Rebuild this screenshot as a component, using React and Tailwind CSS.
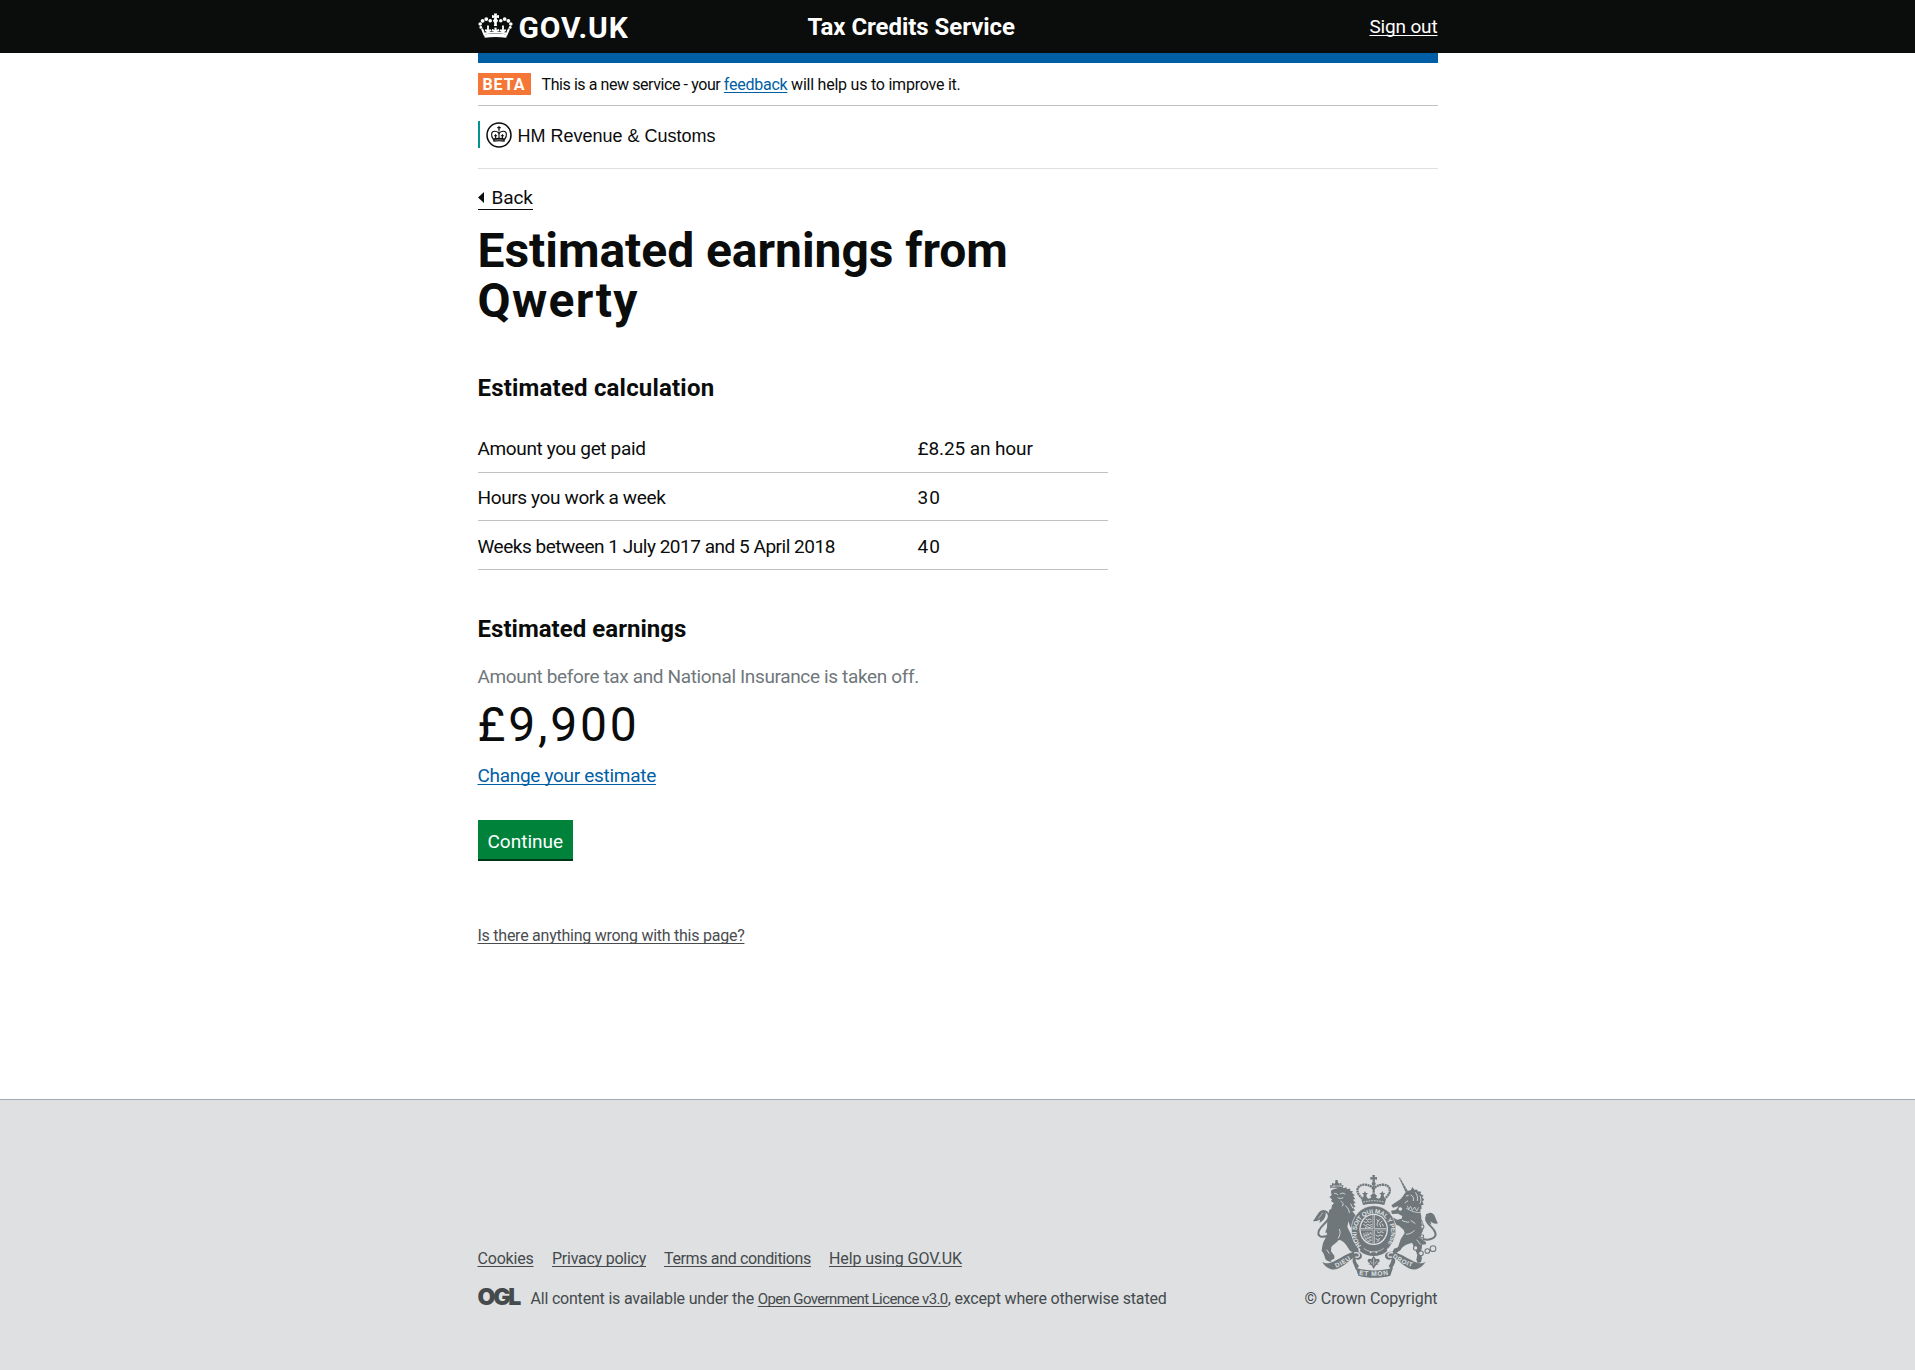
import React from "react";

const link = "underline underline-offset-[2px] decoration-1 [text-decoration-skip-ink:none]";

function GovCrown() {
  return (
    <svg width="35" height="26" viewBox="0 0 35 26" fill="#fff" className="block shrink-0">
      <path d="M15.9 0.4h3.2l-0.4 2.2 2.3-0.5v3l-2.3-0.4 0.3 1.5c0.9 0.4 1.2 1.4 0.7 2.3l-1 1.2 0.3 3.2h-3l0.3-3.2-1-1.2c-0.5-0.9-0.2-1.9 0.7-2.3l0.3-1.5-2.3 0.4v-3l2.3 0.5z" />
      <circle cx="12.2" cy="7.7" r="1.8" />
      <circle cx="8.3" cy="6.1" r="1.9" />
      <circle cx="4.6" cy="7.8" r="1.9" />
      <circle cx="2.2" cy="11" r="1.8" />
      <circle cx="2.8" cy="14.4" r="1.4" />
      <circle cx="22.8" cy="7.7" r="1.8" />
      <circle cx="26.7" cy="6.1" r="1.9" />
      <circle cx="30.4" cy="7.8" r="1.9" />
      <circle cx="32.8" cy="11" r="1.8" />
      <circle cx="32.2" cy="14.4" r="1.4" />
      <g fill="none" stroke="#fff">
        <path d="M4 15.6l2.6 6.6M31 15.6l-2.6 6.6" strokeWidth="2" />
        <path d="M10 12.6v7.6M25 12.6v7.6" strokeWidth="1.8" />
        <path d="M7.2 16.8l2.8 1.8 2.8-1.8M22.2 16.8l2.8 1.8 2.8-1.8" strokeWidth="2" />
        <path d="M17.5 14.6v5.4" strokeWidth="2.2" />
        <path d="M13.8 16.8l3.7 1.4 3.7-1.4" strokeWidth="1.8" />
        <path d="M6.6 20.4c7-1.3 14.8-1.3 21.8 0" strokeWidth="1.6" />
      </g>
      <path d="M5.8 21.6c7.6-1.6 15.8-1.6 23.4 0l-1 3.2c-6.8-1.2-14.6-1.2-21.4 0z" />
    </svg>
  );
}

function HmrcCrest() {
  return (
    <svg width="26" height="26" viewBox="0 0 26 26" className="block shrink-0" fill="none" stroke="#0b0c0c">
      <circle cx="13" cy="13" r="12" strokeWidth="1.5" />
      <path d="M13 4.2v4.6M11.3 5.6h3.4" strokeWidth="1.3" />
      <path d="M7.4 17.4C4.4 13.4 5.2 9.4 8.6 9.3c2.2-0.1 3.8 1 4.4 2.2 0.6-1.2 2.2-2.3 4.4-2.2 3.4 0.1 4.2 4.1 1.2 8.1" strokeWidth="1.1" />
      <path d="M13 9.5v7M9.6 12.2v4.6M16.4 12.2v4.6M8.1 13.8h3M14.9 13.8h3" strokeWidth="1.1" />
      <path d="M7 16.4c3.8-1 8.2-1 12 0l-0.4 3.4c-3.6-0.8-7.6-0.8-11.2 0z" fill="#0b0c0c" stroke="none" />
      <path d="M8.6 18.1c2.8-0.4 6-0.4 8.8 0" strokeWidth="0.5" stroke="#fff" />
    </svg>
  );
}

function CoatOfArms() {
  const g = "#6f777b";
  const bg = "#dee0e2";
  return (
    <svg width="125" height="103" viewBox="69 44 375 309" className="block" fill={g}>
      <defs>
        <path id="garter" d="M214 256A52 57 0 1 1 289 256" />
        <path id="left-scroll" d="M138 322Q164 313 189 292" />
        <path id="mid-scroll" d="M207 343Q251 352 298 342" />
        <path id="right-scroll" d="M307 290Q335 312 372 322" />
      </defs>

      {/* imperial crown */}
      <path d="M247 44h8l-1 7 7-1v8l-7-1 1 7h-8l1-7-7 1v-8l7 1z" />
      <circle cx="251" cy="70" r="6" />
      <g fill="none" stroke={g}>
        <path d="M217 114C194 96 200 74 222 73c14 0 24 5 29 14 5-9 15-14 29-14 22 1 28 23 5 41" strokeWidth="7" strokeDasharray="6 1.5" />
        <path d="M251 76v42" strokeWidth="7" strokeDasharray="6 1.5" />
      </g>
      <path d="M214 117c4-2 7-7 7-14l-5-5h6l3-6 3 6h6l-5 5c0 6 3 11 7 12l8-3-3-6 6-5 8 0 6 5-3 6 8 3c4-1 7-6 7-12l-5-5h6l3-6 3 6h6l-5 5c0 7 3 12 7 14l-5 17c-20-5-44-5-64 0z" />
      <path d="M220 125c20-5 42-5 62 0" fill="none" stroke={bg} strokeWidth="2.5" strokeDasharray="5 3" />

      {/* lion */}
      <path d="M121 84l-1-11 5 3 2-9 6 4 4-7h-1v-5h7v5l4 6 7-3 1 9 6-2-4 11c-12-3-24-3-36-1z" />
      <path d="M124 80c10-4 22-4 32-1M130 74l5 3M148 72l3 4" fill="none" stroke={bg} strokeWidth="2" />
      <path d="M124 90c10-7 26-9 38-7l8-2 0 5 11-1-1 6 9 2-3 5 9 7-6 2 7 9-7 2 8 10-7 2 7 10-7 1 5 10-8 1 6 8c8 8 13 21 14 34l5 11-4 8-13 0-14-13-6-17-3 16c4 10 12 22 17 38l10 17 6 10 1 11-10 2-15-4-8-12c-6-12-14-20-26-23-8 10-18 14-23 22l-1 13 10 13 0 9-10 5 1 5-9-2-8-5-6-18-6-9 2-14c2-14 10-24 15-34l-3-7-4 2 6-16 1-25 5-6 0-21 7-5 2-10 6-6-9-7 3-5-8-7 7-5-2-10z" />
      <path d="M132 100c6-2 9 0 12 4M150 101c7-4 12-3 16 1M143 112c6 3 11 3 17 0M152 122l8 8-3 8M166 136c8 6 12 14 12 22M148 206c4 8 3 19-4 28M110 268l8 12M182 130l7 14" fill="none" stroke={bg} strokeWidth="2.6" />
      <path d="M118 224c-24 11-38 4-31-14 6-14 25-24 29-38 3-12-5-20-18-20" fill="none" stroke={g} strokeWidth="6" />
      <path d="M100 149c-15 2-15 13-31 33 9 2 17-1 22-5l-3 10c13-4 21-19 19-31z" />
      <path d="M99 157c-6 6-8 12-15 18" fill="none" stroke={bg} strokeWidth="2" />

      {/* unicorn */}
      <path d="M326 51l5 3 22 37-6 5z" />
      <path d="M330 59l5-2M335 68l5-3M340 77l5-4M345 86l5-4" stroke={bg} strokeWidth="1.6" />
      <path d="M332 116c8-9 13-19 18-23l13-4 4-9 6 8 10 0-1 5 12 1-3 6 10 6-5 4 7 9-6 3 4 11-7 2 1 11-8 1c5 9 8 20 7 30 10 14 8 30 2 40l-8 14 20 15 0 6-12 1c0 10-2 19-5 25l5 14-3 14-10 2-4-10 3-14-7-18-9-19c-17 5-29 10-34 22l-14 10-12-1 6-13 12-4 8-24 12-19-3-9-14-13-7-2-8-12-11 2-2-10-12-4-5-12 5-7 12 5 7 13 15 9 14-3 2-8c-9-3-15-8-18-15l6-15-8 3-8 2-5-7z" />
      <path d="M348 107l8-2M362 104c8 4 10 10 8 18M376 96c6 6 8 16 6 26M390 106c4 10 3 18 0 24M344 128l10-7M362 180l14 10M374 210c-8 8-18 12-26 12M336 180c8 4 14 6 22 5M395 184c3 8 3 16-1 22M380 238l12 15" fill="none" stroke={bg} strokeWidth="2.6" />
      <path d="M350 134l5 12 6-10 6 13 7-11 6 13 7-12 5 10-3 12c-14-1-30-5-43-13z" />
      <path d="M349 144c12 8 27 13 42 13M352 136l4 11 6-9 5 12 7-10 6 12 6-11" fill="none" stroke={bg} strokeWidth="2.2" />
      <path d="M303 151l13-2 12-10 14 4-5 12-15 5-16 1z" />
      <circle cx="331" cy="146" r="5.5" fill={bg} />
      <path d="M398 236c24 6 42-4 38-19-4-15-22-22-27-37-3-12 6-19 17-18" fill="none" stroke={g} strokeWidth="6" />
      <path d="M420 157c15 1 14 13 24 32-9 3-17-1-22-6l2 10c-13-5-19-20-16-31z" />
      <g fill={bg} stroke={g} strokeWidth="3.2">
        <circle cx="397" cy="199" r="5" />
        <circle cx="396" cy="228" r="5" />
        <circle cx="377" cy="263" r="6.5" />
        <circle cx="393" cy="279" r="7" />
        <circle cx="412" cy="272" r="7" />
        <circle cx="429" cy="265" r="8.5" />
      </g>

      {/* garter and shield */}
      <ellipse cx="251" cy="209" rx="67" ry="73" stroke={bg} strokeWidth="2" />
      <ellipse cx="251" cy="207" rx="43" ry="47" fill={bg} />
      <text fill={bg} fontFamily="Liberation Sans, sans-serif" fontWeight="700" fontSize="19" textLength="250">
        <textPath href="#garter">HONI SOIT QUI MAL Y PENSE</textPath>
      </text>
      <ellipse cx="251" cy="207" rx="39" ry="43" />
      <path d="M251 164v86M212 207h78" stroke={bg} strokeWidth="6" />
      <path d="M251 164v86M212 207h78" stroke={g} strokeWidth="2.5" />
      <g fill="none" stroke={bg} strokeWidth="2.6">
        <path d="M221 183l7 4 5-4 6 3 6-3M220 192l7 4 6-4 6 3 7-3M225 202l6-3 6 3 8-3M227 176l5 3 6-3 6 2" />
        <path d="M261 214l7 4 5-4 8 3M257 224l7 4 6-4 9 3M257 235l6 3 8-4M260 244l8-4" />
        <path d="M263 198c-4-8 0-18 8-22M272 200l-3-10 8-9M280 198l-3-8M259 177l8 7" />
        <path d="M221 218c1 14 8 23 20 28M227 216c1 11 7 19 17 24M233 215c1 8 4 13 12 18M240 215l5 9M221 228l24-10M225 237l20-8M233 244l12-5" strokeWidth="2" />
      </g>
      <path d="M216 258c12 14 24 19 35 19s24-5 35-19l6 14c-12 10-26 15-41 15s-30-5-42-15z" />
      <path d="M221 264c18 14 42 14 60 0" fill="none" stroke={bg} strokeWidth="2" />
      <circle cx="242" cy="276" r="2.6" fill={bg} />
      <circle cx="259" cy="276" r="2.6" fill={bg} />

      {/* compartment and scroll */}
      <path d="M96 304c14 8 28 5 42-4 16-8 32-20 50-25 15-3 29 2 28 13-1 9-12 13-20 8 2 9 6 15 11 21l-9 12-9-22c-3-6-1-13 4-16-14 8-32 29-55 36-15 2-29-3-42-23z" />
      <path d="M407 304c-14 8-28 5-42-4-16-8-34-20-52-25-15-3-29 2-28 13 1 9 12 13 20 8-2 9-4 15-9 21l8 12 11-22c2-6 0-13-4-16 14 8 32 29 53 36 15 2 30-3 43-23z" />
      <path d="M193 278c9-3 17 1 15 8-2 5-8 6-12 3M309 278c-9-3-17 1-15 8 2 5 8 6 12 3" fill="none" stroke={bg} strokeWidth="4" />
      <path d="M197 322c35 11 75 11 112 0l-8 24c-30 8-67 8-96 0z" />
      <path d="M251 286l7 11c6-4 11-1 11 5-1 4-4 6-8 6l5 4-8 2-7 12-7-12-8-2 5-4c-4 0-7-2-8-6 0-6 5-9 11-5z" />
      <path d="M251 294v21M240 303c3 1 6 3 6 7M262 303c-3 1-6 3-6 7" fill="none" stroke={bg} strokeWidth="2" />
      <g fill={bg} fontFamily="Liberation Sans, sans-serif" fontWeight="700">
        <text fontSize="19" textLength="52"><textPath href="#left-scroll">DIEU</textPath></text>
        <text fontSize="20" textLength="88"><textPath href="#mid-scroll">ET MON</textPath></text>
        <text fontSize="19" textLength="66"><textPath href="#right-scroll">DROIT</textPath></text>
      </g>
    </svg>
  );
}

const rows = [
  { label: "Amount you get paid", value: "£8.25 an hour", row: "h-[49px] pt-[13px]", l: "tracking-[-0.35px]", v: "tracking-[-0.1px]" },
  { label: "Hours you work a week", value: "30", row: "h-[48px] pt-[13px]", l: "tracking-[-0.37px]", v: "tracking-[1px]" },
  { label: "Weeks between 1 July 2017 and 5 April 2018", value: "40", row: "h-[49px] pt-[14px]", l: "tracking-[-0.475px]", v: "tracking-[1px]" },
];

export default function App() {
  return (
    <div className="min-h-[1370px] bg-white font-['Roboto',sans-serif] text-[19px] leading-[24px] text-[#0b0c0c]">
      <header className="h-[53px] bg-[#0b0c0c] text-white">
        <div className="mx-auto flex w-[960px] items-start">
          <div className="flex w-[330px] items-start pt-[13px]">
            <GovCrown />
            <span className="ml-[6px] text-[30px] font-bold leading-[30px] tracking-[0.9px]">GOV.UK</span>
          </div>
          <span className="pt-[12px] text-[24px] font-bold leading-[30px] tracking-[-0.05px]">Tax Credits Service</span>
          <a className={`${link} ml-auto pt-[15px] tracking-[-0.16px]`}>Sign out</a>
        </div>
      </header>

      <main className="mx-auto w-[960px]">
        <div className="h-[10px] bg-[#005ea5]" />
        <div className="flex h-[43px] items-start border-b border-[#bfc1c3] pt-[10px] text-[16px] leading-[20px]">
          <span className="h-[22px] w-[53px] bg-[#f47738] pl-[5px] pt-[2px] font-bold tracking-[0.9px] text-white">BETA</span>
          <p className="ml-[11px] whitespace-pre pt-[2px]">
            <span className="tracking-[-0.42px]">This is a new service - your </span>
            <a className={`${link} tracking-[-0.255px] text-[#005ea5]`}>feedback</a>
            <span className="tracking-[-0.23px]"> will help us to improve it.</span>
          </p>
        </div>

        <div className="flex h-[63px] items-start border-b border-[#dee0e2] pt-[15px]">
          <div className="flex h-[27px] items-center border-l-2 border-[#009390] pl-[6px]">
            <HmrcCrest />
            <span className="ml-[6px] pt-[2px] font-['Liberation_Sans',sans-serif] text-[18px]">HM Revenue &amp; Customs</span>
          </div>
        </div>

        <a className="mt-[16px] flex h-[25px] w-[55.5px] items-start border-b border-[#0b0c0c] pt-px leading-[24px]">
          <svg width="6" height="11" viewBox="0 0 6 11" className="mt-[6px]"><path d="M6 0v11L0 5.5z" fill="#0b0c0c" /></svg>
          <span className="ml-[8px] tracking-[-0.1px]">Back</span>
        </a>

        <h1 className="mt-[16px] w-[640px] text-[48px] font-bold leading-[50px]">
          <span className="block tracking-[-0.05px]">Estimated earnings from</span>
          <span className="block tracking-[1.3px]">Qwerty</span>
        </h1>

        <h2 className="mt-[47px] text-[24px] font-bold leading-[30px] tracking-[0.19px]">Estimated calculation</h2>

        <div className="mt-[21px] w-[630px]">
          {rows.map((r) => (
            <div key={r.label} className={`${r.row} flex border-b border-[#bfc1c3]`}>
              <span className={`${r.l} w-[440px]`}>{r.label}</span>
              <span className={r.v}>{r.value}</span>
            </div>
          ))}
        </div>

        <h2 className="mt-[44px] text-[24px] font-bold leading-[30px] tracking-[0.03px]">Estimated earnings</h2>
        <p className="mt-[21px] tracking-[-0.36px] text-[#6f777b]">Amount before tax and National Insurance is taken off.</p>
        <p className="mt-[11px] text-[48px] leading-[50px] tracking-[2.8px]">£9,900</p>
        <p className="mt-[14px]">
          <a className={`${link} tracking-[-0.3px] text-[#005ea5]`}>Change your estimate</a>
        </p>
        <button className="mt-[32px] block h-[41px] w-[95px] border-b-2 border-[#003618] bg-[#00823b] pl-[10px] pt-[5px] text-left text-white">Continue</button>
        <p className="mt-[65px] text-[16px] leading-[20px]">
          <a className={`${link} tracking-[-0.25px] text-[#494c4f]`}>Is there anything wrong with this page?</a>
        </p>
      </main>

      <footer className="mt-[153px] h-[271px] border-t border-[#a1acb2] bg-[#dee0e2] text-[16px] leading-[20px] text-[#454a4c]">
        <div className="mx-auto flex w-[960px] justify-between">
          <div className="pt-[149px]">
            <nav className="flex">
              <a className={`${link} w-[74.5px] tracking-[-0.2px]`}>Cookies</a>
              <a className={`${link} w-[112px] tracking-[-0.25px]`}>Privacy policy</a>
              <a className={`${link} w-[165px] tracking-[-0.355px]`}>Terms and conditions</a>
              <a className={`${link} tracking-[-0.08px]`}>Help using GOV.UK</a>
            </nav>
            <div className="mt-[20px] flex">
              <span className="w-[53px] font-['Inter',sans-serif] text-[23px] font-black leading-[17px] tracking-[-2.2px]">OGL</span>
              <p className="whitespace-pre">
                <span className="tracking-[-0.2px]">All content is available under the </span>
                <a className={`${link} text-[15px] tracking-[-0.62px]`}>Open Government Licence v3.0</a>
                <span className="tracking-[-0.17px]">, except where otherwise stated</span>
              </p>
            </div>
          </div>
          <div className="flex flex-col items-end pt-[75px]">
            <CoatOfArms />
            <span className="mt-[11px] tracking-[-0.09px]">© Crown Copyright</span>
          </div>
        </div>
      </footer>
    </div>
  );
}
